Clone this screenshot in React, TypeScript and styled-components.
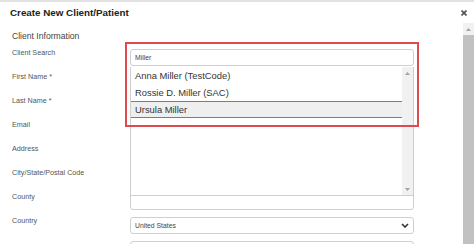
import React from "react";
import styled, { createGlobalStyle } from "styled-components";

const GlobalStyle = createGlobalStyle`
  html, body {
    margin: 0;
    padding: 0;
    background: #ffffff;
    font-family: "Liberation Sans", Arial, sans-serif;
    overflow: hidden;
  }
`;

const Modal = styled.div`
  width: 474px;
  height: 244px;
  border-top: 2px solid #e2e2e2;
  box-sizing: border-box;
  display: flex;
  flex-direction: column;
  overflow: hidden;
`;

const Header = styled.div`
  height: 21px;
  display: flex;
  align-items: center;
  justify-content: space-between;
  padding: 0 6px 0 10px;
`;

const Title = styled.h1`
  margin: 0;
  font-size: 9.8px;
  font-weight: bold;
  color: #222;
  line-height: 12px;
`;

const CloseButton = styled.button`
  border: none;
  background: none;
  padding: 0;
  width: 8px;
  height: 8px;
  display: flex;
  align-items: center;
  justify-content: center;
  cursor: pointer;
`;

const Body = styled.div`
  flex: 1;
  display: flex;
  min-height: 0;
`;

const Content = styled.div`
  flex: 1;
  padding: 8px 0 0 12px;
`;

const SectionTitle = styled.h2`
  margin: 0 0 7px;
  font-size: 8.6px;
  font-weight: normal;
  color: #444;
  line-height: 11px;
`;

const Form = styled.div`
  display: grid;
  grid-template-columns: 118px 284px;
  grid-auto-rows: 24px;
`;

const Label = styled.label`
  font-size: 7.2px;
  color: #555;
  line-height: 8px;
  padding-top: 0;
`;

const Field = styled.div`
  position: relative;
`;

const TextInput = styled.div`
  height: 17px;
  box-sizing: border-box;
  border: 1px solid #cfcfcf;
  border-radius: 3px;
  background: #fff;
  display: flex;
  align-items: center;
  justify-content: space-between;
  padding: 0 4px 0 4px;
  font-size: 6.8px;
  color: #444;
`;

const Highlight = styled.div`
  position: absolute;
  left: -5px;
  right: -5px;
  top: -7px;
  height: 85px;
  box-sizing: border-box;
  border: 2px solid #dd4b4f;
  pointer-events: none;
  z-index: 3;
`;

const ListBox = styled.div`
  position: absolute;
  left: 0;
  right: 0;
  top: 18px;
  height: 129px;
  box-sizing: border-box;
  border: 1px solid #cfcfcf;
  border-top: none;
  background: #fff;
  display: flex;
  z-index: 2;
`;

const Options = styled.div`
  flex: 1;
`;

const Option = styled.div<{ $active?: boolean }>`
  height: 17px;
  box-sizing: border-box;
  display: flex;
  align-items: center;
  padding-left: 4px;
  font-size: 9.4px;
  color: #333;
  background: ${(p) => (p.$active ? "#efefef" : "transparent")};
  border-top: ${(p) => (p.$active ? "1px solid #7d7d7d" : "none")};
  border-bottom: ${(p) => (p.$active ? "1px solid #7d7d7d" : "none")};
`;

const ListScroll = styled.div`
  width: 11px;
  background: #f1f1f1;
  display: flex;
  flex-direction: column;
  justify-content: space-between;
  align-items: center;
  padding: 5px 0 4px;
`;

const PageScroll = styled.div`
  width: 11px;
  display: flex;
  flex-direction: column;
  background: #c1c1c1;
`;

const ScrollCap = styled.div`
  height: 12px;
  background: #f1f1f1;
  display: flex;
  justify-content: center;
  padding-top: 5px;
  box-sizing: border-box;
`;

const Arrow = ({ down }: { down?: boolean }) => (
  <svg width="5" height="3" viewBox="0 0 5 3">
    <polygon points={down ? "0,0 5,0 2.5,3" : "0,3 5,3 2.5,0"} fill="#a3a3a3" />
  </svg>
);

const rows = [
  "First Name *",
  "Last Name *",
  "Email",
  "Address",
  "City/State/Postal Code",
  "County",
];

export default function App() {
  return (
    <>
      <GlobalStyle />
      <Modal>
        <Header>
          <Title>Create New Client/Patient</Title>
          <CloseButton aria-label="close">
            <svg width="6" height="6" viewBox="0 0 6 6">
              <path d="M0.5 0.5 L5.5 5.5 M5.5 0.5 L0.5 5.5" stroke="#555" strokeWidth="1.7" />
            </svg>
          </CloseButton>
        </Header>
        <Body>
          <Content>
            <SectionTitle>Client Information</SectionTitle>
            <Form>
              <Label>Client Search</Label>
              <Field>
                <TextInput>Miller</TextInput>
                <ListBox>
                  <Options>
                    <Option>Anna Miller (TestCode)</Option>
                    <Option>Rossie D. Miller (SAC)</Option>
                    <Option $active>Ursula Miller</Option>
                  </Options>
                  <ListScroll>
                    <Arrow />
                    <Arrow down />
                  </ListScroll>
                </ListBox>
                <Highlight />
              </Field>
              {rows.map((r) => (
                <React.Fragment key={r}>
                  <Label>{r}</Label>
                  <Field>
                    <TextInput />
                  </Field>
                </React.Fragment>
              ))}
              <Label>Country</Label>
              <Field>
                <TextInput>
                  United States
                  <svg width="8" height="5" viewBox="0 0 8 5">
                    <polyline points="1,1 4,4 7,1" fill="none" stroke="#333" strokeWidth="1.6" />
                  </svg>
                </TextInput>
              </Field>
              <Label />
              <Field>
                <TextInput />
              </Field>
            </Form>
          </Content>
          <PageScroll>
            <ScrollCap>
              <Arrow />
            </ScrollCap>
          </PageScroll>
        </Body>
      </Modal>
    </>
  );
}
